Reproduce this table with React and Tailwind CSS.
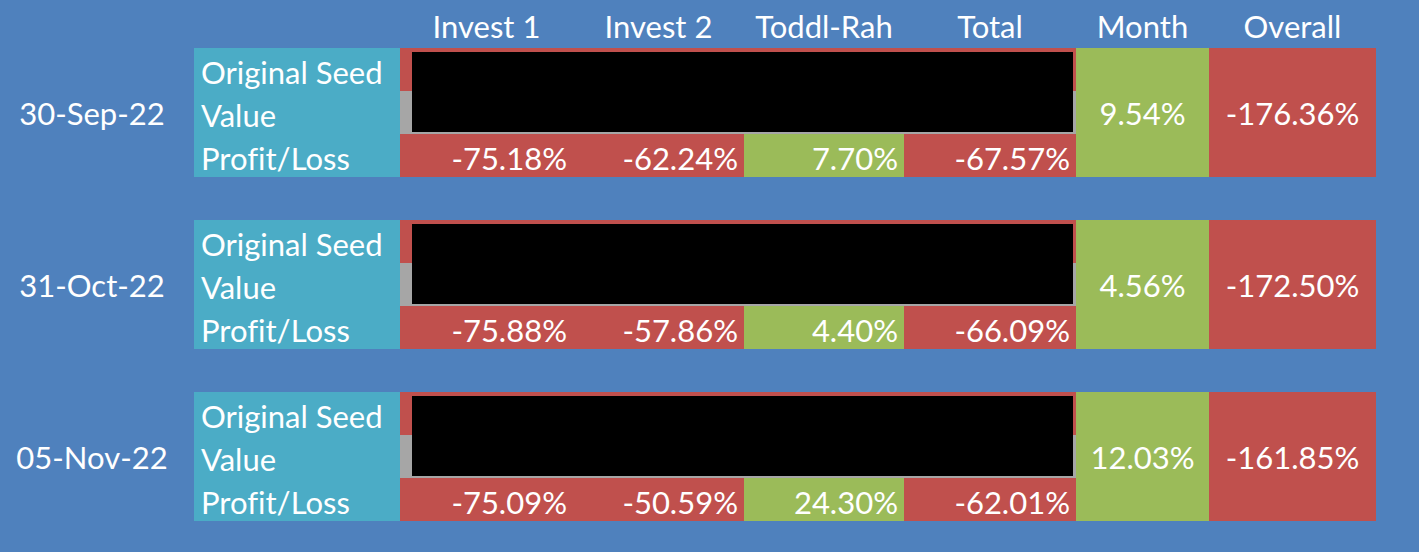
const cols = [
  { name: "Invest 1", w: "w-[173px]" },
  { name: "Invest 2", w: "w-[171px]" },
  { name: "Toddl-Rah", w: "w-[160px]" },
  { name: "Total", w: "w-[172px]" },
];

const rows = [
  {
    date: "30-Sep-22",
    pl: [
      ["-75.18%", "bg-[#c0504d]"],
      ["-62.24%", "bg-[#c0504d]"],
      ["7.70%", "bg-[#9bbb59]"],
      ["-67.57%", "bg-[#c0504d]"],
    ],
    month: "9.54%",
    overall: "-176.36%",
  },
  {
    date: "31-Oct-22",
    pl: [
      ["-75.88%", "bg-[#c0504d]"],
      ["-57.86%", "bg-[#c0504d]"],
      ["4.40%", "bg-[#9bbb59]"],
      ["-66.09%", "bg-[#c0504d]"],
    ],
    month: "4.56%",
    overall: "-172.50%",
  },
  {
    date: "05-Nov-22",
    pl: [
      ["-75.09%", "bg-[#c0504d]"],
      ["-50.59%", "bg-[#c0504d]"],
      ["24.30%", "bg-[#9bbb59]"],
      ["-62.01%", "bg-[#c0504d]"],
    ],
    month: "12.03%",
    overall: "-161.85%",
  },
];

function Block({ r }) {
  return (
    <div className="flex h-[129px]">
      {/* date */}
      <div className="w-[194px] flex items-center justify-center pr-[10px] pt-[2px]">
        {r.date}
      </div>

      {/* labels */}
      <div className="w-[206px] bg-[#4bacc6] flex flex-col pl-[7px]">
        <div className="h-[43px] flex items-end pb-[3px]">Original Seed</div>
        <div className="h-[43px] flex items-end pb-[3px]">Value</div>
        <div className="h-[43px] flex items-end pb-[3px]">Profit/Loss</div>
      </div>

      {/* seed / value / profit-loss */}
      <div className="w-[676px] flex flex-col relative">
        <div className="h-[43px] bg-[#c0504d]" />
        <div className="h-[43px] bg-[#a6a6a6]" />
        <div className="h-[43px] flex">
          {cols.map((c, i) => (
            <div
              key={c.name}
              className={`${c.w} ${r.pl[i][1]} flex items-end justify-end pr-[6px] pb-[3px]`}
            >
              {r.pl[i][0]}
            </div>
          ))}
        </div>
        {/* redacted values */}
        <div className="absolute left-[12px] top-[4px] w-[661px] h-[80px] bg-black" />
      </div>

      {/* month */}
      <div className="w-[133px] bg-[#9bbb59] flex items-center justify-center pt-[2px]">
        {r.month}
      </div>

      {/* overall */}
      <div className="w-[167px] bg-[#c0504d] flex items-center justify-center pt-[2px]">
        {r.overall}
      </div>
    </div>
  );
}

export default function App() {
  return (
    <div
      className="w-[1419px] h-[552px] bg-[#4f81bd] text-white text-[31px] leading-none overflow-hidden [font-variant-ligatures:none]"
      style={{ fontFamily: "Lato, 'Noto Sans', sans-serif" }}
    >
      <div className="flex h-[48px] pl-[400px]">
        {cols.map((c) => (
          <div key={c.name} className={`${c.w} flex items-end justify-center pb-[6px]`}>
            {c.name}
          </div>
        ))}
        <div className="w-[133px] flex items-end justify-center pb-[6px]">Month</div>
        <div className="w-[167px] flex items-end justify-center pb-[6px]">Overall</div>
      </div>

      <div className="flex flex-col gap-[43px]">
        {rows.map((r) => (
          <Block key={r.date} r={r} />
        ))}
      </div>
    </div>
  );
}
